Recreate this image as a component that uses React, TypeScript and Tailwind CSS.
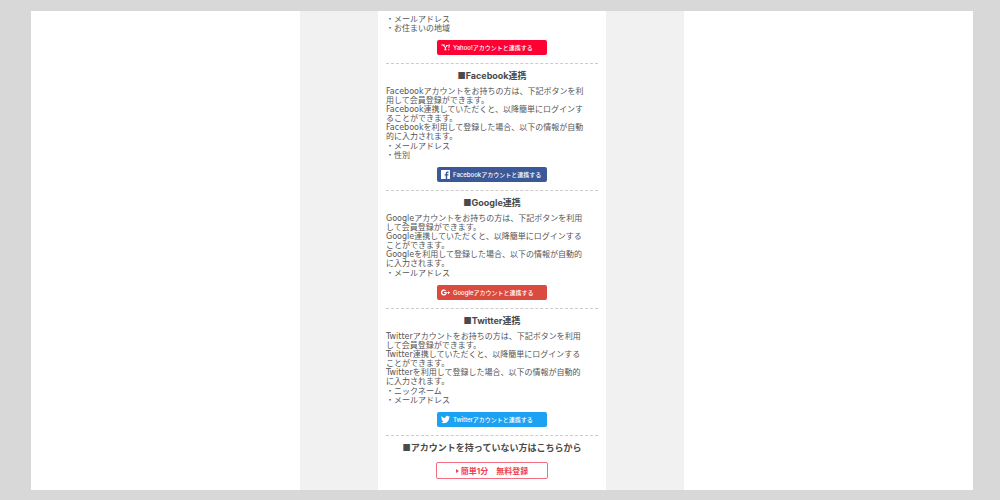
import React from "react";

interface Provider {
  name: string;
  paragraph: string[];
  items: string[];
  color: string;
}

const providers: Provider[] = [
  {
    name: "Facebook",
    paragraph: [
      "Facebookアカウントをお持ちの方は、下記ボタンを利",
      "用して会員登録ができます。",
      "Facebook連携していただくと、以降簡単にログインす",
      "ることができます。",
      "Facebookを利用して登録した場合、以下の情報が自動",
      "的に入力されます。",
    ],
    items: ["メールアドレス", "性別"],
    color: "bg-[#3b5998]",
  },
  {
    name: "Google",
    paragraph: [
      "Googleアカウントをお持ちの方は、下記ボタンを利用",
      "して会員登録ができます。",
      "Google連携していただくと、以降簡単にログインする",
      "ことができます。",
      "Googleを利用して登録した場合、以下の情報が自動的",
      "に入力されます。",
    ],
    items: ["メールアドレス"],
    color: "bg-[#db4a3f]",
  },
  {
    name: "Twitter",
    paragraph: [
      "Twitterアカウントをお持ちの方は、下記ボタンを利用",
      "して会員登録ができます。",
      "Twitter連携していただくと、以降簡単にログインする",
      "ことができます。",
      "Twitterを利用して登録した場合、以下の情報が自動的",
      "に入力されます。",
    ],
    items: ["ニックネーム", "メールアドレス"],
    color: "bg-[#1da1f2]",
  },
];

export default function App() {
  return (
    <div className="min-h-screen bg-[#d8d8d8] pt-[11px] pr-[27px] pb-[10px] pl-[31px] font-['Inter','Noto_Sans_CJK_JP',sans-serif] text-[#555]">
      <main className="flex justify-center bg-white pr-5">
        <div className="w-full max-w-96 bg-[#f1f1f1] px-[78px]">
          <div className="bg-white px-2 pt-1 pb-[11px]">
            <section>
              <ItemList items={["メールアドレス", "お住まいの地域"]} />
              <ConnectButton name="Yahoo!" color="bg-[#ff0033]" />
            </section>

            {providers.map((p) => (
              <section key={p.name} className="mt-2 border-t border-dashed border-[#ccc] pt-1.5">
                <Heading>{p.name}連携</Heading>
                <p className="mt-[5px] mb-px font-['DejaVu_Sans','Noto_Sans_CJK_JP',sans-serif] text-[8px] leading-[9px] whitespace-nowrap">
                  {p.paragraph.map((line) => (
                    <React.Fragment key={line}>
                      {line}
                      <br />
                    </React.Fragment>
                  ))}
                </p>
                <ItemList items={p.items} />
                <ConnectButton name={p.name} color={p.color} />
              </section>
            ))}

            <section className="mt-2 border-t border-dashed border-[#ccc] pt-1.5">
              <Heading>アカウントを持っていない方はこちらから</Heading>
              <button
                type="button"
                className="mx-auto mt-2 flex h-[17px] w-28 items-center justify-center gap-0.5 rounded-xs border border-[#f26d80] bg-white text-[8px] leading-none font-bold whitespace-nowrap text-[#f0405a]"
              >
                <svg className="h-1 w-[3px]" viewBox="0 0 3 4" fill="currentColor" aria-hidden="true">
                  <path d="M0 0l3 2-3 2z" />
                </svg>
                簡単1分　無料登録
              </button>
            </section>
          </div>
        </div>
      </main>
    </div>
  );
}

function Heading({ children }: { children: React.ReactNode }) {
  return (
    <h2 className="text-center text-[9px] leading-3 font-bold whitespace-nowrap text-[#4a4a4a]">
      ■{children}
    </h2>
  );
}

/** 連携時に自動入力される項目 */
function ItemList({ items }: { items: string[] }) {
  return (
    <ul className="text-[8px] leading-[9px]">
      {items.map((item) => (
        <li key={item}>・{item}</li>
      ))}
    </ul>
  );
}

function ConnectButton({ name, color }: { name: string; color: string }) {
  return (
    <button
      type="button"
      className={`mx-auto mt-[7px] flex h-[15px] w-[110px] items-center gap-[3px] rounded-xs pl-1 text-[6px] leading-none font-medium whitespace-nowrap text-white ${color}`}
    >
      <ProviderIcon name={name} />
      <span>{name}アカウントと連携する</span>
    </button>
  );
}

/** サービスのロゴ */
function ProviderIcon({ name }: { name: string }) {
  const icons: Record<string, React.ReactNode> = {
    "Yahoo!": (
      <>
        <path d="M1 4h9v2.400H8.400l3.100 4 2.900-2.800H13V5.400h6.400v2.200h-1.800L13.300 12v5h2.200v2.400H8V17h2.200v-5L5 6.400H1z" />
        <path d="M20 4h3.600l-1.500 10h-2zM19.500 16h2.600v3h-2.600z" />
      </>
    ),
    Facebook: (
      <path d="M1.500 0h21A1.500 1.500 0 0124 1.500v21a1.500 1.500 0 01-1.500 1.500h-6v-9.300h3.100l.5-3.600h-3.600V8.800c0-1 .3-1.800 1.800-1.800h1.900V3.800c-.3 0-1.500-.1-2.800-.1-2.800 0-4.700 1.700-4.700 4.800v2.600H9.600v3.600h3.100V24H1.500A1.500 1.500 0 010 22.500v-21A1.500 1.500 0 011.500 0z" />
    ),
    Google: (
      <path d="M8 10.400v3h4.500c-.4 2-2.100 3.200-4.500 3.200a4.600 4.600 0 010-9.200c1.200 0 2.300.4 3.100 1.200l2.300-2.200A8 8 0 108 20c4.600 0 7.700-3.200 7.700-7.800 0-.6 0-1.200-.2-1.800zM19 9v2.200h-2.200v2.400H19v2.200h2.400v-2.200h2.400v-2.400h-2.400V9z" />
    ),
    Twitter: (
      <path d="M23.950 4.570a10 10 0 01-2.820.770 4.960 4.960 0 002.160-2.720c-.950.550-2 .950-3.120 1.180a4.920 4.920 0 00-8.380 4.480A13.930 13.930 0 011.640 3.160a4.920 4.920 0 001.520 6.570 4.900 4.900 0 01-2.230-.610v.060a4.920 4.920 0 003.950 4.830 5 5 0 01-2.210.080 4.940 4.940 0 004.600 3.420A9.870 9.870 0 010 19.540a14 14 0 007.550 2.210c9.050 0 14-7.500 14-13.990 0-.210 0-.420-.020-.630a9.940 9.940 0 002.420-2.560z" />
    ),
  };

  return (
    <svg className="size-[9px] shrink-0" viewBox="0 0 24 24" fill="currentColor" aria-hidden="true">
      {icons[name]}
    </svg>
  );
}
